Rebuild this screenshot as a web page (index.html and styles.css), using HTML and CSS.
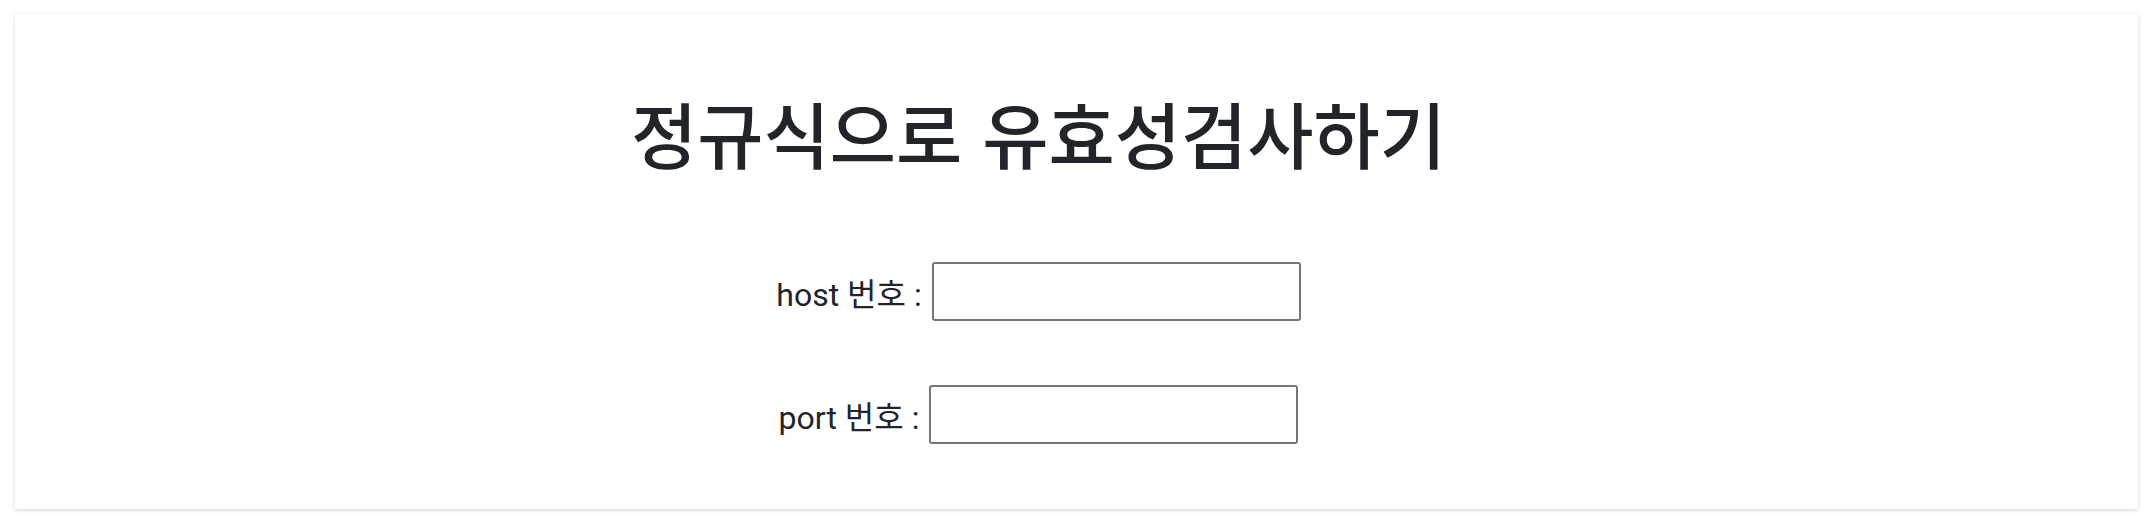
FILE: index.html
```html
<!DOCTYPE html>
<html lang="ko">
<head>
<meta charset="utf-8">
<title>정규식으로 유효성검사하기</title>
<link rel="stylesheet" href="styles.css">
</head>
<body>
<div class="card">
  <h1 class="title">정규식으로 유효성검사하기</h1>
  <div class="row">
    <label class="label" for="host">host 번호 :</label>
    <input class="field" id="host" type="text">
  </div>
  <div class="row">
    <label class="label" for="port">port 번호 :</label>
    <input class="field" id="port" type="text">
  </div>
</div>
</body>
</html>
```

FILE: styles.css
```css
html, body {
  margin: 0;
  padding: 0;
  background: #ffffff;
}

body {
  padding: 14px 14px 15px 15px;
  font-family: "Roboto", "Noto Sans CJK KR", sans-serif;
  color: #212529;
}

.card {
  height: 495px;
  box-sizing: border-box;
  background: #ffffff;
  box-shadow: 0 1px 4px rgba(0, 0, 0, 0.18);
  display: flex;
  flex-direction: column;
  align-items: center;
  padding-right: 76px;
}

.title {
  margin: 82px 0 0 0;
  font-family: "Noto Sans CJK KR", sans-serif;
  font-size: 72px;
  font-weight: 500;
  line-height: 1;
  color: #212529;
}

.row {
  display: flex;
  align-items: center;
  gap: 10px;
  margin-top: 94px;
}

.row + .row {
  margin-top: 64px;
}

.label {
  font-size: 32px;
  color: #212529;
}

.field {
  width: 369px;
  height: 59px;
  box-sizing: border-box;
  border: 2px solid #767676;
  border-radius: 3px;
  background: #ffffff;
  margin: 0;
  padding: 0 8px;
}
```
